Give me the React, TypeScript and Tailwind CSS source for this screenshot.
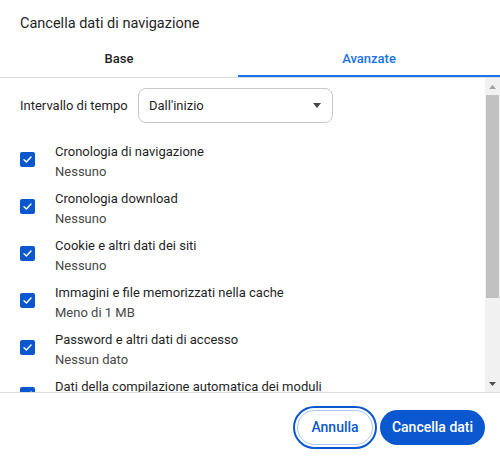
const items = [
  { label: "Cronologia di navigazione", sub: "Nessuno" },
  { label: "Cronologia download", sub: "Nessuno" },
  { label: "Cookie e altri dati dei siti", sub: "Nessuno" },
  { label: "Immagini e file memorizzati nella cache", sub: "Meno di 1 MB" },
  { label: "Password e altri dati di accesso", sub: "Nessun dato" },
  { label: "Dati della compilazione automatica dei moduli", sub: "" },
]

function Checkbox() {
  return (
    <div className="w-[15px] h-[15px] rounded-[2px] bg-[#0b57d0] flex items-center justify-center shrink-0 -mt-1">
      <svg width="11" height="11" viewBox="0 0 12 12" fill="none">
        <path d="M2.2 6.3 4.8 8.8 9.8 3.4" stroke="white" strokeWidth="1.6" strokeLinecap="round" strokeLinejoin="round" />
      </svg>
    </div>
  )
}

export default function App() {
  return (
    <div className="w-[500px] h-[457px] bg-white flex flex-col overflow-hidden text-[#1f1f1f] font-['Roboto','Liberation_Sans',sans-serif]">
      {/* Title */}
      <div className="h-10 px-5 pt-[14px] text-[14.5px] leading-5 text-[#1f1f1f]">Cancella dati di navigazione</div>

      {/* Tabs */}
      <div className="flex h-[38px] border-b border-[#dadce0]">
        <div className="w-[238px] flex items-center justify-center text-[13px] font-medium text-[#1f1f1f] pt-px">Base</div>
        <div className="flex-1 flex items-center justify-center text-[13px] font-medium text-[#1a73e8] border-b-2 border-[#1a73e8] pt-[3px]">Avanzate</div>
      </div>

      {/* Scrollable content */}
      <div className="h-[315px] flex border-b border-[#dadce0]">
        <div className="flex-1 overflow-hidden pt-[10px]">
          <div className="flex items-center h-[35px] pl-5">
            <span className="w-[118px] text-[13px] text-[#1f1f1f]">Intervallo di tempo</span>
            <div className="w-[195px] h-[35px] rounded-[8px] border border-[#c7c7c7] flex items-center justify-between pl-[10px] pr-[11px]">
              <span className="text-[13px] text-[#1f1f1f]">Dall'inizio</span>
              <svg width="8" height="5" viewBox="0 0 8 5">
                <path d="M0 0h8L4 5z" fill="#474747" />
              </svg>
            </div>
          </div>
          <div className="mt-[15px]">
            {items.map((it) => (
              <div key={it.label} className="h-[47px] flex items-center pl-5">
                <Checkbox />
                <div className="ml-5 flex flex-col text-[13px] leading-5">
                  <span className="text-[#1f1f1f]">{it.label}</span>
                  <span className="text-[#474747] h-5">{it.sub}</span>
                </div>
              </div>
            ))}
          </div>
        </div>

        {/* Scrollbar */}
        <div className="w-[15px] bg-[#f1f1f1] flex flex-col">
          <div className="h-[17px] flex items-center justify-center">
            <svg width="7" height="4" viewBox="0 0 7 4">
              <path d="M0 4h7L3.5 0z" fill="#a3a3a3" />
            </svg>
          </div>
          <div className="h-[203px] mx-px bg-[#c1c1c1]" />
          <div className="flex-1" />
          <div className="h-[17px] flex items-center justify-center">
            <svg width="7" height="4" viewBox="0 0 7 4">
              <path d="M0 0h7L3.5 4z" fill="#505050" />
            </svg>
          </div>
        </div>
      </div>

      {/* Footer */}
      <div className="flex-1 flex items-center justify-end gap-[7px] pr-[15px] pt-[4px]">
        <button className="h-[35px] w-[76px] rounded-full border border-[#a8c7fa] bg-white text-[14px] font-medium text-[#0b57d0] outline-2 outline-offset-2 outline-[#0b57d0]">
          Annulla
        </button>
        <button className="h-[35px] w-[105px] rounded-full bg-[#0b57d0] text-[14px] font-medium text-white">
          Cancella dati
        </button>
      </div>
    </div>
  )
}
